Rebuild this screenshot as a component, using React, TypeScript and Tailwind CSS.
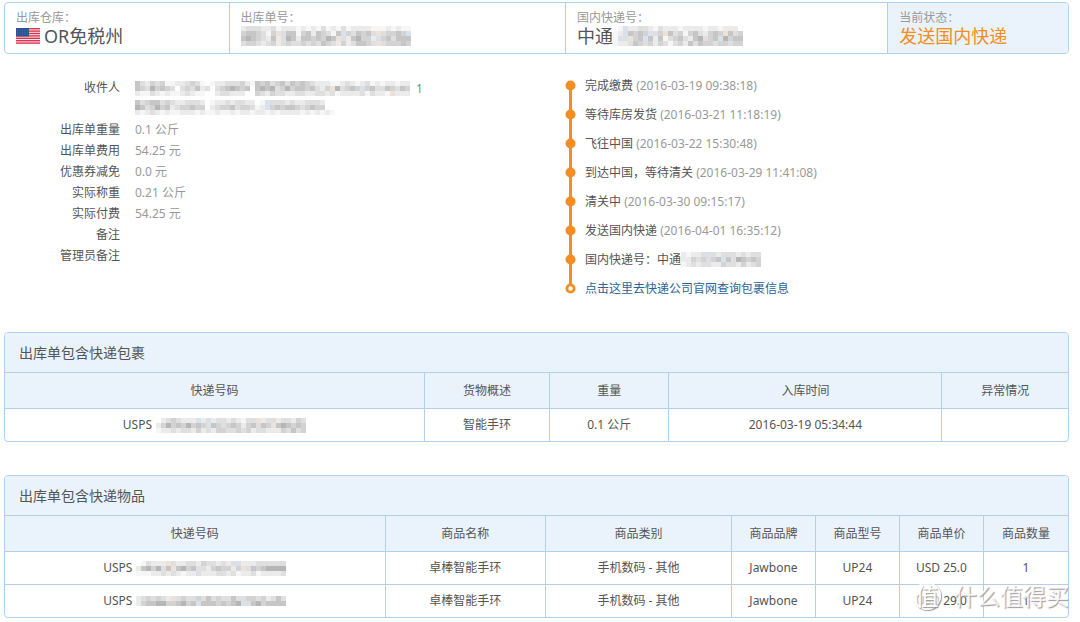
import type { ReactNode } from 'react';

import { clsx } from 'clsx';

//-------------------------------- Mosaic --------------------------------
const CELL = 5;

const SHADES: Record<string, string> = {
  '0': '#f6f6f6',
  '1': '#ebebeb',
  '2': '#dfdfdf',
  '3': '#d3d3d3',
  '4': '#c6c6c6',
  '5': '#b4b6b8',
  b: '#d9e2ec',
  p: '#ede2d9',
};

const MOSAICS = {
  order: [
    '1222112011101010201020111100010100',
    '3443203p244034143204b324342p23343b',
    '4543214125414434354p2145331b342444',
    '233212312322323243213124432p233343',
  ],
  tracking: [
    ' 0b1122102111011110110111',
    '01b4343b23p42303421343p423',
    '0b2p34b41402342145234b5344',
    '01124323132023142433233233',
  ],
  addressTop: [
    '42132300112320 0112223104342342434321110012101201011011',
    '43253432 232412 2345434 454523534434213p52343b342243243',
    '10021010012100  122111  321322112211221201111202110p111',
  ],
  addressBottom: [
    '42344232112221 011212211 0b22212112221',
    '54235341233433 12334233201b34344323433 ',
    '1012101001110100100101101101011110101010',
  ],
  domestic: ['10112b2122212122', '11323234b4254343', '0121221132213123'],
  parcel: [
    ' 1232111b12122121022p122122132',
    '1353435343b432343134243p454343',
    '011212213121332232312211132423',
  ],
  itemTop: [
    ' 02111p2112213221212b111222222',
    '1453524p4534b21343313p24345555',
    '000112121011211122120112011112',
  ],
  itemBottom: [
    '1232321p2322324232242233231242',
    '134455334534b44434345b24534444',
  ],
};

interface MosaicProps {
  name: keyof typeof MOSAICS;
  className?: string;
}

const Mosaic = ({ name, className }: MosaicProps) => {
  const rows = MOSAICS[name];
  const width = Math.max(...rows.map((row) => row.length)) * CELL;

  return (
    <svg
      width={width}
      height={rows.length * CELL}
      shapeRendering="crispEdges"
      aria-hidden="true"
      className={clsx('inline-block shrink-0', className)}
    >
      {rows.map((row, y) =>
        [...row].map((shade, x) =>
          SHADES[shade] ? (
            <rect
              key={`${x}-${y}`}
              x={x * CELL}
              y={y * CELL}
              width={CELL}
              height={CELL}
              fill={SHADES[shade]}
            />
          ) : null
        )
      )}
    </svg>
  );
};

//-------------------------------- Flag --------------------------------
const UsFlag = () => (
  <svg width="24" height="16" viewBox="0 0 24 16" aria-hidden="true" className="shrink-0">
    <rect width="24" height="16" fill="#fbe9ec" />
    {[0, 1, 2, 3, 4, 5, 6].map((i) => (
      <rect key={i} y={i * 2.4} width="24" height="1.4" fill="#dc3450" />
    ))}
    <rect width="13" height="8.4" fill="#2f4f93" />
    {[1.5, 3.5, 5.5].map((y) =>
      [1.5, 4, 6.5, 9, 11.3].map((x) => (
        <circle key={`${x}-${y}`} cx={x} cy={y + 0.5} r="0.4" fill="#8ea3cc" />
      ))
    )}
  </svg>
);

//-------------------------------- Summary --------------------------------
interface SummaryCellProps {
  label: string;
  active?: boolean;
  children: ReactNode;
}

const SummaryCell = ({ label, active, children }: SummaryCellProps) => (
  <div
    className={clsx(
      'border-l border-[#b1d0ee] pt-2 pb-1.5 pl-[11px] first:border-l-0',
      active && 'bg-[#eaf3fb]'
    )}
  >
    <div className="text-xs leading-[14px] text-[#999]">{label}</div>
    <div
      className={clsx(
        'flex h-[22px] items-center text-lg leading-[22px]',
        active ? 'text-[#f68d22]' : 'text-[#555]'
      )}
    >
      {children}
    </div>
  </div>
);

//-------------------------------- Details --------------------------------
const DETAILS = [
  { label: '出库单重量', value: '0.1 公斤' },
  { label: '出库单费用', value: '54.25 元' },
  { label: '优惠券减免', value: '0.0 元' },
  { label: '实际称重', value: '0.21 公斤' },
  { label: '实际付费', value: '54.25 元' },
  { label: '备注', value: '' },
  { label: '管理员备注', value: '' },
];

const Details = () => (
  <dl className="grid grid-cols-[116px_1fr] content-start gap-x-[15px] leading-[21px]">
    <dt className="text-right">收件人</dt>
    <dd className="mb-1 flex flex-col gap-1 pt-1 text-[#888]">
      <span className="flex h-[15px] items-center">
        <Mosaic name="addressTop" />
        <span className="pl-1.5">1</span>
      </span>
      <Mosaic name="addressBottom" />
    </dd>
    {DETAILS.map(({ label, value }) => (
      <div key={label} className="col-span-2 grid grid-cols-subgrid">
        <dt className="text-right">{label}</dt>
        <dd className="text-[#999]">{value}</dd>
      </div>
    ))}
  </dl>
);

//-------------------------------- Timeline --------------------------------
const EVENTS = [
  { text: '完成缴费', time: '2016-03-19 09:38:18' },
  { text: '等待库房发货', time: '2016-03-21 11:18:19' },
  { text: '飞往中国', time: '2016-03-22 15:30:48' },
  { text: '到达中国，等待清关', time: '2016-03-29 11:41:08' },
  { text: '清关中', time: '2016-03-30 09:15:17' },
  { text: '发送国内快递', time: '2016-04-01 16:35:12' },
];

interface TimelineItemProps {
  first?: boolean;
  last?: boolean;
  children: ReactNode;
}

const TimelineItem = ({ first, last, children }: TimelineItemProps) => (
  <li className="flex h-[29px] items-center gap-[9px]">
    <svg width="11" height="29" aria-hidden="true" className="shrink-0">
      <rect x="4" y={first ? 14 : 0} width="3" height={first || last ? 15 : 29} fill="#f68d22" />
      <circle cx="5.5" cy="14.5" r="5" fill="#f68d22" />
      {last && <circle cx="5.5" cy="14.5" r="2.2" fill="#fff" />}
    </svg>
    <span className="flex items-center whitespace-pre">{children}</span>
  </li>
);

const Timeline = () => (
  <ul>
    {EVENTS.map(({ text, time }, index) => (
      <TimelineItem key={time} first={index === 0}>
        {text} <span className="text-[#999]">({time})</span>
      </TimelineItem>
    ))}
    <TimelineItem>
      国内快递号：中通
      <Mosaic name="domestic" />
    </TimelineItem>
    <TimelineItem last>
      <a href="#" className="text-[#2a6496]">
        点击这里去快递公司官网查询包裹信息
      </a>
    </TimelineItem>
  </ul>
);

//-------------------------------- DataTable --------------------------------
interface Column {
  title: string;
  width: string;
}

interface DataTableProps {
  title: string;
  columns: Column[];
  rows: ReactNode[][];
}

const DataTable = ({ title, columns, rows }: DataTableProps) => (
  <section className="overflow-hidden rounded-sm border border-[#b1d0ee]">
    <h2 className="bg-[#eaf3fb] pt-0.5 pb-0.5 pl-[14px] text-sm leading-[35px]">{title}</h2>
    <table className="w-full table-fixed border-separate border-spacing-0 text-center">
      <thead>
        <tr className="bg-[#eaf3fb]">
          {columns.map((column) => (
            <th
              key={column.title}
              className={clsx(
                'h-9 border-t border-l border-[#b1d0ee] font-normal first:border-l-0',
                column.width
              )}
            >
              {column.title}
            </th>
          ))}
        </tr>
      </thead>
      <tbody>
        {rows.map((row, rowIndex) => (
          <tr key={rowIndex}>
            {row.map((cell, index) => (
              <td
                key={columns[index].title}
                className="h-[33px] border-t border-l border-[#b1d0ee] first:border-l-0"
              >
                {cell}
              </td>
            ))}
          </tr>
        ))}
      </tbody>
    </table>
  </section>
);

const PARCEL_COLUMNS: Column[] = [
  { title: '快递号码', width: 'w-[39.4%]' },
  { title: '货物概述', width: 'w-[11.8%]' },
  { title: '重量', width: 'w-[11.2%]' },
  { title: '入库时间', width: 'w-[25.7%]' },
  { title: '异常情况', width: 'w-[11.9%]' },
];

const ITEM_COLUMNS: Column[] = [
  { title: '快递号码', width: 'w-[35.7%]' },
  { title: '商品名称', width: 'w-[15.1%]' },
  { title: '商品类别', width: 'w-[17.5%]' },
  { title: '商品品牌', width: 'w-[7.9%]' },
  { title: '商品型号', width: 'w-[7.9%]' },
  { title: '商品单价', width: 'w-[7.9%]' },
  { title: '商品数量', width: 'w-[8%]' },
];

const TrackingNumber = ({ name }: { name: keyof typeof MOSAICS }) => (
  <span className="flex items-center justify-center gap-1">
    USPS
    <Mosaic name={name} />
  </span>
);

//-------------------------------- Watermark --------------------------------
const Watermark = () => (
  <div className="pointer-events-none absolute right-0 bottom-1.5 flex items-center gap-[13px] text-[23px] leading-8 whitespace-nowrap text-white/80 [text-shadow:1px_1px_1px_#999]">
    <span className="flex size-7 items-center justify-center rounded-full border border-white bg-white/60 text-white shadow-[1px_1px_1px_#999]">
      值
    </span>
    什么值得买
  </div>
);

const App = () => (
  <main className="bg-white pt-0.5 pr-[11px] pb-1 pl-1 font-['Noto_Sans','Noto_Sans_CJK_SC',sans-serif] text-xs text-[#555]">
    <header className="grid grid-cols-[224fr_337fr_323fr_181fr] overflow-hidden rounded-sm border border-[#b1d0ee]">
      <SummaryCell label="出库仓库：">
        <span className="flex items-center gap-1">
          <UsFlag />
          OR免税州
        </span>
      </SummaryCell>
      <SummaryCell label="出库单号：">
        <Mosaic name="order" />
      </SummaryCell>
      <SummaryCell label="国内快递号：">
        中通
        <Mosaic name="tracking" />
      </SummaryCell>
      <SummaryCell label="当前状态：" active>
        发送国内快递
      </SummaryCell>
    </header>

    <div className="grid grid-cols-[561fr_504fr] pt-[17px] pb-[29px]">
      <div className="pt-1.5">
        <Details />
      </div>
      <Timeline />
    </div>

    <div className="flex flex-col gap-[33px]">
      <DataTable
        title="出库单包含快递包裹"
        columns={PARCEL_COLUMNS}
        rows={[
          [
            <TrackingNumber name="parcel" />,
            '智能手环',
            '0.1 公斤',
            '2016-03-19 05:34:44',
            '',
          ],
        ]}
      />
      <div className="relative">
        <DataTable
          title="出库单包含快递物品"
          columns={ITEM_COLUMNS}
          rows={[
            [
              <TrackingNumber name="itemTop" />,
              '卓棒智能手环',
              '手机数码 - 其他',
              'Jawbone',
              'UP24',
              'USD 25.0',
              '1',
            ],
            [
              <TrackingNumber name="itemBottom" />,
              '卓棒智能手环',
              '手机数码 - 其他',
              'Jawbone',
              'UP24',
              'USD 29.0',
              '1',
            ],
          ]}
        />
        <Watermark />
      </div>
    </div>
  </main>
);

export default App;
